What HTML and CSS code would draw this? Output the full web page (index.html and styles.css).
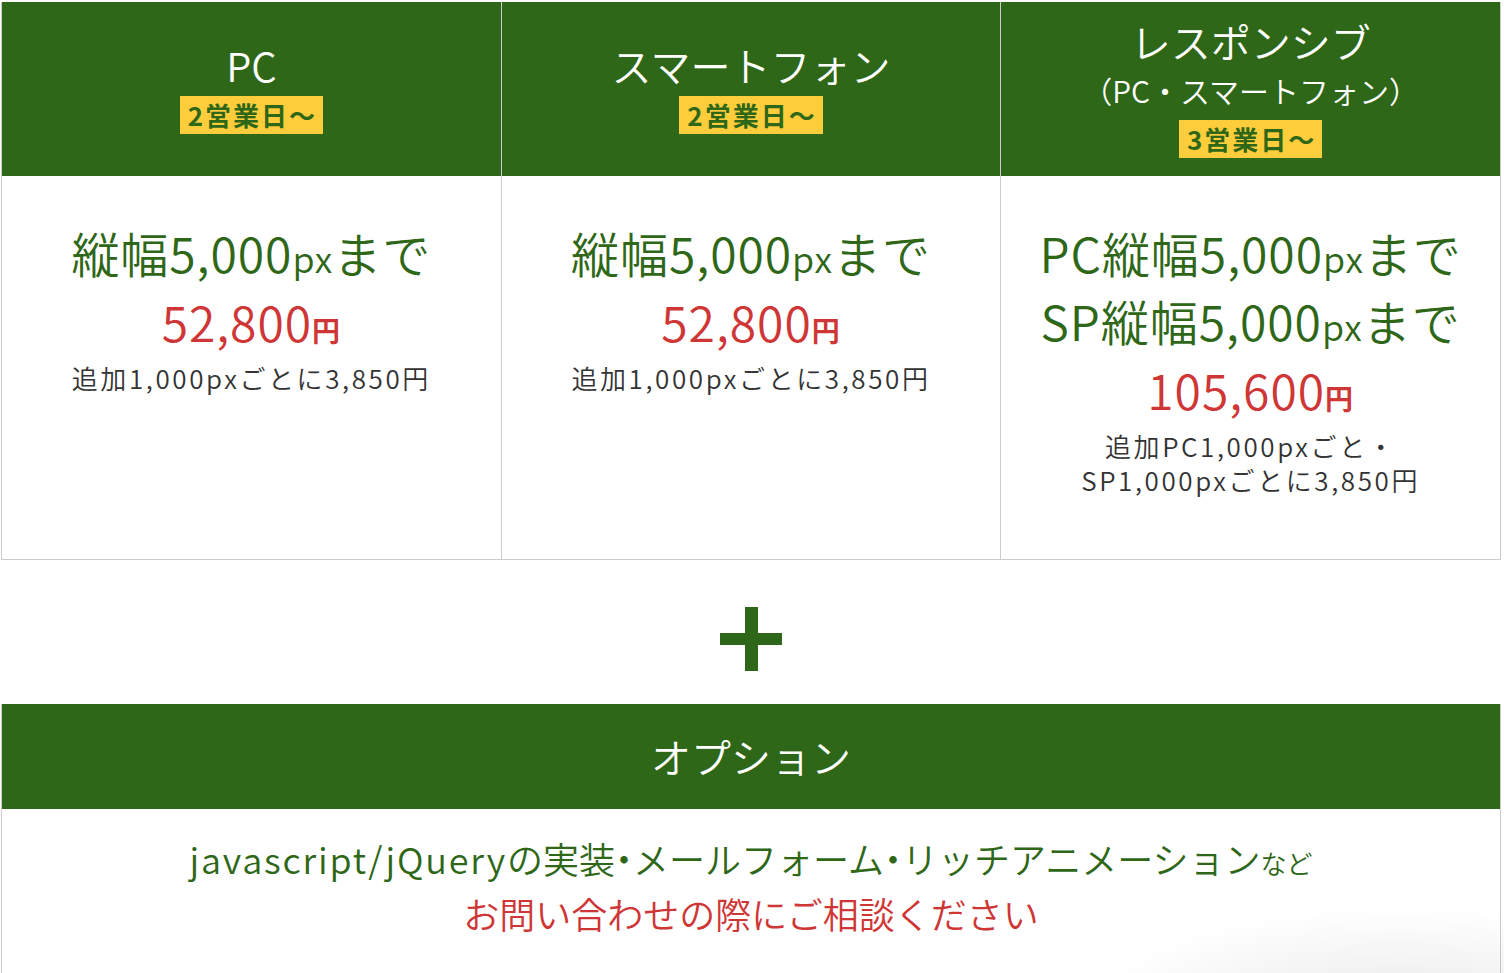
FILE: index.html
```html
<!DOCTYPE html>
<html lang="ja">
<head>
<meta charset="utf-8">
<title>料金表</title>
<link rel="stylesheet" href="styles.css">
</head>
<body>
<div class="page">
  <div class="plans">
    <div class="plan-head">
      <p class="plan-title">PC</p>
      <span class="badge">2営業日〜</span>
    </div>
    <div class="plan-head">
      <p class="plan-title">スマートフォン</p>
      <span class="badge">2営業日〜</span>
    </div>
    <div class="plan-head">
      <p class="plan-title">レスポンシブ</p>
      <p class="plan-sub">（PC・スマートフォン）</p>
      <span class="badge">3営業日〜</span>
    </div>

    <div class="plan-body">
      <p class="plan-size">縦幅5,000<span class="unit">px</span>まで</p>
      <p class="plan-price">52,800<span class="yen">円</span></p>
      <p class="plan-extra">追加1,000pxごとに3,850円</p>
    </div>
    <div class="plan-body">
      <p class="plan-size">縦幅5,000<span class="unit">px</span>まで</p>
      <p class="plan-price">52,800<span class="yen">円</span></p>
      <p class="plan-extra">追加1,000pxごとに3,850円</p>
    </div>
    <div class="plan-body">
      <p class="plan-size">PC縦幅5,000<span class="unit">px</span>まで</p>
      <p class="plan-size">SP縦幅5,000<span class="unit">px</span>まで</p>
      <p class="plan-price">105,600<span class="yen">円</span></p>
      <p class="plan-extra">追加PC1,000pxごと・<br>SP1,000pxごとに3,850円</p>
    </div>
  </div>

  <div class="plus" role="img" aria-label="プラス"></div>

  <section class="option">
    <h2 class="option-head">オプション</h2>
    <div class="option-body">
      <p class="option-text"><span class="latin">javascript/jQuery</span>の実装<span class="dot">・</span>メールフォーム<span class="dot">・</span>リッチアニメーション<span class="option-small">など</span></p>
      <p class="option-note">お問い合わせの際にご相談ください</p>
    </div>
  </section>
</div>
<div class="screen-shade"></div>
</body>
</html>
```

FILE: styles.css
```css
html, body {
  margin: 0;
  padding: 0;
  background: #fff;
}

body {
  font-family: "Noto Sans CJK JP", "Noto Sans", sans-serif;
  font-weight: 350;
  color: #333;
  overflow: hidden;
}

p, h2 {
  margin: 0;
}

.page {
  width: 1500px;
  margin: 2px 0 0 1px;
}

/* ---------- plans table ---------- */
.plans {
  display: grid;
  grid-template-columns: repeat(3, 1fr);
  grid-template-rows: 174px auto;
  column-gap: 1px;
  background: #cccccc;
  padding: 0 1px 1px;
  box-sizing: border-box;
  width: 1500px;
}

.plan-head {
  background: #2f6718;
  color: #fff;
  display: flex;
  flex-direction: column;
  align-items: center;
  justify-content: center;
  padding-top: 2px;
  box-sizing: border-box;
  text-align: center;
}

.plan-title {
  font-size: 40px;
  line-height: 50px;
}

.plan-sub {
  font-size: 30px;
  line-height: 48px;
}

.badge {
  display: block;
  margin: 6px 0;
  background: #fecd3b;
  color: #2f6718;
  font-size: 26px;
  font-weight: 700;
  line-height: 38px;
  letter-spacing: 2px;
  padding: 0 6px 0 8px;
}

.plan-body {
  background: #fff;
  padding: 42px 0 62px;
  text-align: center;
}

.plan-size {
  color: #2f6718;
  font-size: 48px;
  line-height: 68px;
  letter-spacing: 0.02em;
}

.unit {
  font-size: 0.75em;
  line-height: 1;
}

.plan-price {
  color: #cf3636;
  font-size: 48px;
  line-height: 70px;
  letter-spacing: 0.02em;
}

.yen {
  font-size: 28px;
  font-weight: 700;
  line-height: 1;
}

.plan-extra {
  margin-top: 5px;
  font-size: 26px;
  line-height: 34px;
  letter-spacing: 0.1em;
  color: #333;
}

/* ---------- plus ---------- */
.plus {
  width: 62px;
  height: 64px;
  margin: 47px auto 33px;
  background:
    linear-gradient(#2f6718, #2f6718) center / 13px 64px no-repeat,
    linear-gradient(#2f6718, #2f6718) center / 62px 12px no-repeat;
}

/* ---------- option ---------- */
.option {
  border-left: 1px solid #cccccc;
  border-right: 1px solid #cccccc;
}

.option-head {
  background: #2f6718;
  color: #fff;
  font-size: 40px;
  font-weight: 350;
  line-height: 105px;
  text-align: center;
}

.option-body {
  padding: 22px 0 60px;
  text-align: center;
  font-size: 36px;
  line-height: 55px;
}

.option-text {
  color: #2f6718;
}

.latin {
  letter-spacing: 0.05em;
}

.dot {
  font-feature-settings: "halt";
}

.option-small {
  font-size: 26px;
  line-height: 1;
}

.option-note {
  color: #cf3636;
}

/* soft shadow visible in the bottom-right corner of the viewport */
.screen-shade {
  position: fixed;
  right: 0;
  bottom: 0;
  width: 420px;
  height: 110px;
  pointer-events: none;
  background: radial-gradient(ellipse 75% 100% at 75% 140%, rgba(0, 0, 0, 0.09), rgba(0, 0, 0, 0) 100%);
}
```
